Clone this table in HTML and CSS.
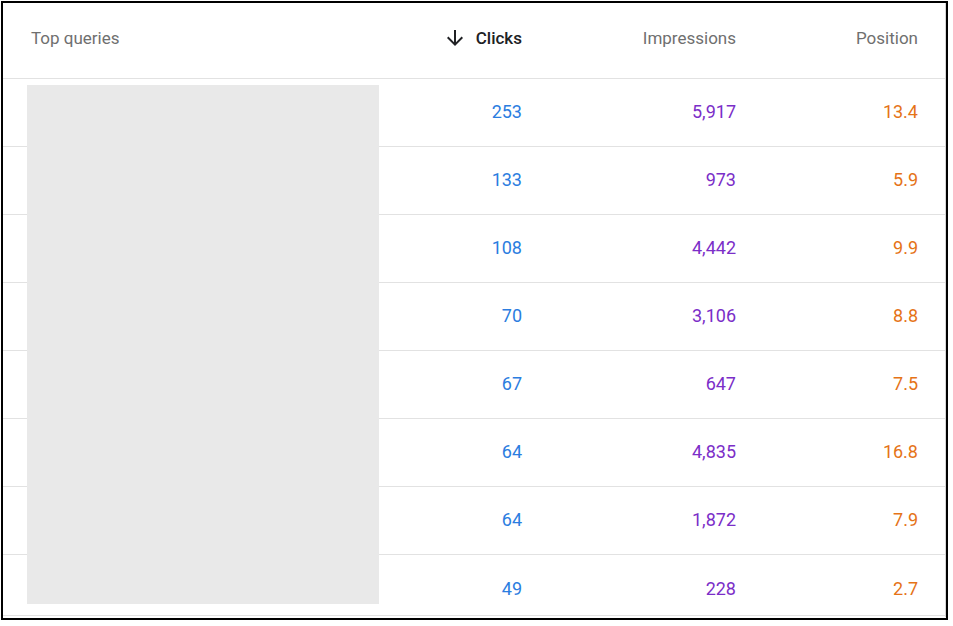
FILE: index.html
```html
<!DOCTYPE html>
<html>
<head>
<meta charset="utf-8">
<link rel="stylesheet" href="styles.css">
</head>
<body>
<div class="frame">
  <div class="card">
    <div class="row head">
      <div class="cell query">Top queries</div>
      <div class="cell num sorted">
        <svg class="arrow" viewBox="0 0 24 24" width="24" height="24"><path d="M20 12l-1.41-1.41L13 16.17V4h-2v12.17l-5.58-5.59L4 12l8 8 8-8z"/></svg>
        <span>Clicks</span>
      </div>
      <div class="cell num">Impressions</div>
      <div class="cell num">Position</div>
    </div>
    <div class="row"><div class="cell query"></div><div class="cell num clicks">253</div><div class="cell num impr">5,917</div><div class="cell num pos">13.4</div></div>
    <div class="row"><div class="cell query"></div><div class="cell num clicks">133</div><div class="cell num impr">973</div><div class="cell num pos">5.9</div></div>
    <div class="row"><div class="cell query"></div><div class="cell num clicks">108</div><div class="cell num impr">4,442</div><div class="cell num pos">9.9</div></div>
    <div class="row"><div class="cell query"></div><div class="cell num clicks">70</div><div class="cell num impr">3,106</div><div class="cell num pos">8.8</div></div>
    <div class="row"><div class="cell query"></div><div class="cell num clicks">67</div><div class="cell num impr">647</div><div class="cell num pos">7.5</div></div>
    <div class="row"><div class="cell query"></div><div class="cell num clicks">64</div><div class="cell num impr">4,835</div><div class="cell num pos">16.8</div></div>
    <div class="row"><div class="cell query"></div><div class="cell num clicks">64</div><div class="cell num impr">1,872</div><div class="cell num pos">7.9</div></div>
    <div class="row last"><div class="cell query"></div><div class="cell num clicks">49</div><div class="cell num impr">228</div><div class="cell num pos">2.7</div></div>
    <div class="redact"></div>
  </div>
</div>
</body>
</html>
```
FILE: styles.css
```css
html, body {
  margin: 0;
  padding: 0;
  background: #ffffff;
}
body {
  font-family: Roboto, "Liberation Sans", Arial, sans-serif;
  font-size: 18px;
}
.frame {
  margin: 1px 0 0 1px;
  width: 943px;
  height: 615px;
  border: 2px solid #000;
  overflow: hidden;
}
.card {
  position: relative;
  width: 942px;
  height: 614px;
  border-right: 1px solid #d6d6d6;
  overflow: hidden;
  background: #fff;
}
.row {
  display: grid;
  grid-template-columns: 1fr 214px 214px 182px;
  padding-right: 27px;
  height: 67px;
  border-bottom: 1px solid #e2e2e2;
  align-items: start;
}
.row .cell {
  padding-top: 23px;
}
.row.head {
  height: 75px;
}
.row.head .cell {
  padding-top: 25px;
  color: #6f6f6f;
  font-size: 17px;
}
.row.last {
  height: 60px;
}
.row.last .cell {
  padding-top: 24px;
}
.cell {
  line-height: 20px;
  height: 20px;
}
.query {
  padding-left: 28px;
}
.num {
  text-align: right;
  display: flex;
  justify-content: flex-end;
  align-items: center;
}
.row.head .sorted {
  color: #202124;
  font-weight: 500;
  gap: 9px;
}
.arrow {
  fill: #202124;
  display: block;
  margin: -2px 0;
}
.clicks { color: #2b7de0; }
.impr { color: #7b2ec8; }
.pos { color: #e57317; }
.redact {
  position: absolute;
  left: 24px;
  top: 82px;
  width: 352px;
  height: 519px;
  background: #e9e9e9;
}
```
